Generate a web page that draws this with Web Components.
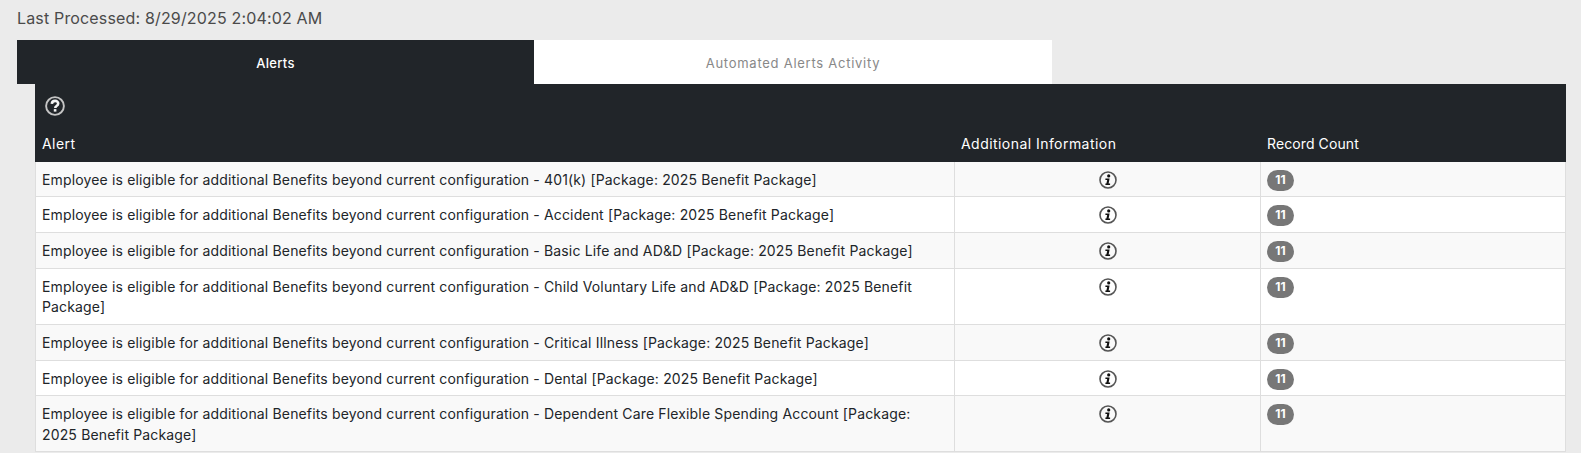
<!DOCTYPE html>
<html>
<head>
<meta charset="utf-8">
<title>Alerts</title>
<style>
  html, body { margin: 0; padding: 0; background: #ebebeb; }
  body { font-family: Inter, "Liberation Sans", sans-serif; overflow: hidden; }
</style>
</head>
<body>
<alerts-page processed="8/29/2025 2:04:02 AM">
  <alert-tabs></alert-tabs>
  <alert-table>
    <alert-row>Employee is eligible for additional Benefits beyond current configuration - 401(k) [Package: 2025 Benefit Package]</alert-row>
    <alert-row>Employee is eligible for additional Benefits beyond current configuration - Accident [Package: 2025 Benefit Package]</alert-row>
    <alert-row>Employee is eligible for additional Benefits beyond current configuration - Basic Life and AD&amp;D [Package: 2025 Benefit Package]</alert-row>
    <alert-row>Employee is eligible for additional Benefits beyond current configuration - Child Voluntary Life and AD&amp;D [Package: 2025 Benefit Package]</alert-row>
    <alert-row>Employee is eligible for additional Benefits beyond current configuration - Critical Illness [Package: 2025 Benefit Package]</alert-row>
    <alert-row>Employee is eligible for additional Benefits beyond current configuration - Dental [Package: 2025 Benefit Package]</alert-row>
    <alert-row>Employee is eligible for additional Benefits beyond current configuration - Dependent Care Flexible Spending Account [Package: 2025 Benefit Package]</alert-row>
  </alert-table>
</alerts-page>
<script>
const FONT = 'Inter, "Liberation Sans", sans-serif';

class AlertsPage extends HTMLElement {
  connectedCallback() {
    this.attachShadow({ mode: 'open' });
    this.shadowRoot.innerHTML = `
      <style>
        :host { display: block; padding: 0 15px 0 17px; font-family: ${FONT}; }
        .processed { height: 40px; line-height: 36px; font-size: 16px; letter-spacing: .16px; color: #4a4a4a; }
      </style>
      <div class="processed">Last Processed: ${this.getAttribute('processed')}</div>
      <slot></slot>
    `;
  }
}

class AlertTabs extends HTMLElement {
  connectedCallback() {
    this.attachShadow({ mode: 'open' });
    this.shadowRoot.innerHTML = `
      <style>
        :host { display: flex; width: 1035px; height: 44px; font-size: 13px; letter-spacing: .3px; font-weight: 500; }
        div { display: flex; align-items: center; justify-content: center; padding-top: 1px; box-sizing: border-box; }
        .active { width: 517px; background: #212529; color: #fff; }
        .idle { flex: 1; background: #fff; color: #888; letter-spacing: .74px; font-weight: 400; }
      </style>
      <div class="active">Alerts</div>
      <div class="idle">Automated Alerts Activity</div>
    `;
  }
}

class AlertTable extends HTMLElement {
  connectedCallback() {
    this.attachShadow({ mode: 'open' });
    this.shadowRoot.innerHTML = `
      <style>
        :host { display: block; margin-left: 18px; }
        .head { background: #212529; color: #fff; height: 77.5px; font-size: 14px; letter-spacing: .45px; }
        .help { padding: 12px 0 0 10px; height: 28px; }
        .help svg { display: block; }
        .cols { display: grid; grid-template-columns: 919px 306px 1fr; padding-top: 10px; }
        .cols span { padding-left: 7px; line-height: 20px; }
        .cols span:last-child { letter-spacing: .1px; }
        ::slotted(alert-row:nth-of-type(odd)) { background: #f9f9f9; }
        ::slotted(alert-row:nth-of-type(even)) { background: #fff; }
      </style>
      <div class="head">
        <div class="help">
          <svg width="20" height="20" viewBox="0 0 20 20" fill="none">
            <circle cx="10" cy="10" r="8.9" stroke="#c4c4c4" stroke-width="1.9"/>
            <path d="M6.8 7.8c.2-1.9 1.5-2.9 3.3-2.9 1.9 0 3.1 1.1 3.1 2.6 0 1.3-.8 1.9-1.7 2.5-.8.5-1.2.9-1.2 1.9" stroke="#f4f4f4" stroke-width="2.6"/>
            <rect x="8.8" y="13.1" width="2.6" height="2.5" fill="#f4f4f4"/>
          </svg>
        </div>
        <div class="cols"><span>Alert</span><span>Additional Information</span><span>Record Count</span></div>
      </div>
      <slot></slot>
    `;
  }
}

class AlertRow extends HTMLElement {
  connectedCallback() {
    this.attachShadow({ mode: 'open' });
    this.shadowRoot.innerHTML = `
      <style>
        :host {
          display: grid;
          grid-template-columns: 918px 306px 1fr;
          font-size: 14px;
          letter-spacing: .155px;
          line-height: 20.3px;
          color: #212529;
          border: solid #dedede;
          border-width: 0 1px 1px 1px;
          box-sizing: border-box;
        }
        .cell { padding: 8px 30px 6.47px 6px; }
        .info { text-align: center; padding: 9px 0 0; border-left: 1px solid #dedede; }
        .count { padding: 8px 0 0 6px; border-left: 1px solid #dedede; }
      </style>
      <div class="cell"><slot></slot></div>
      <div class="info"><info-icon></info-icon></div>
      <div class="count"><count-badge>11</count-badge></div>
    `;
  }
}

class InfoIcon extends HTMLElement {
  connectedCallback() {
    this.attachShadow({ mode: 'open' });
    this.shadowRoot.innerHTML = `
      <style>:host { display: inline-block; width: 18px; height: 18px; } svg { display: block; }</style>
      <svg width="18" height="18" viewBox="0 0 18 18" fill="none">
        <circle cx="9" cy="9" r="8" stroke="#555" stroke-width="1.6"/>
        <circle cx="9.7" cy="4.9" r="1.6" fill="#111"/>
        <path d="M6.4 7.5h4.2l-1 5h1.5v1.5H6.4v-1.5h1l.8-3.5H6.4z" fill="#111"/>
      </svg>
    `;
  }
}

class CountBadge extends HTMLElement {
  connectedCallback() {
    this.attachShadow({ mode: 'open' });
    this.shadowRoot.innerHTML = `
      <style>
        :host {
          display: block; width: 27px; height: 21px; border-radius: 11px;
          background: #777; color: #fff; font-size: 12px; font-weight: 700;
          letter-spacing: 0; line-height: 20px; text-align: center;
        }
      </style>
      <slot></slot>
    `;
  }
}

customElements.define('alerts-page', AlertsPage);
customElements.define('alert-tabs', AlertTabs);
customElements.define('alert-table', AlertTable);
customElements.define('alert-row', AlertRow);
customElements.define('info-icon', InfoIcon);
customElements.define('count-badge', CountBadge);
</script>
</body>
</html>
